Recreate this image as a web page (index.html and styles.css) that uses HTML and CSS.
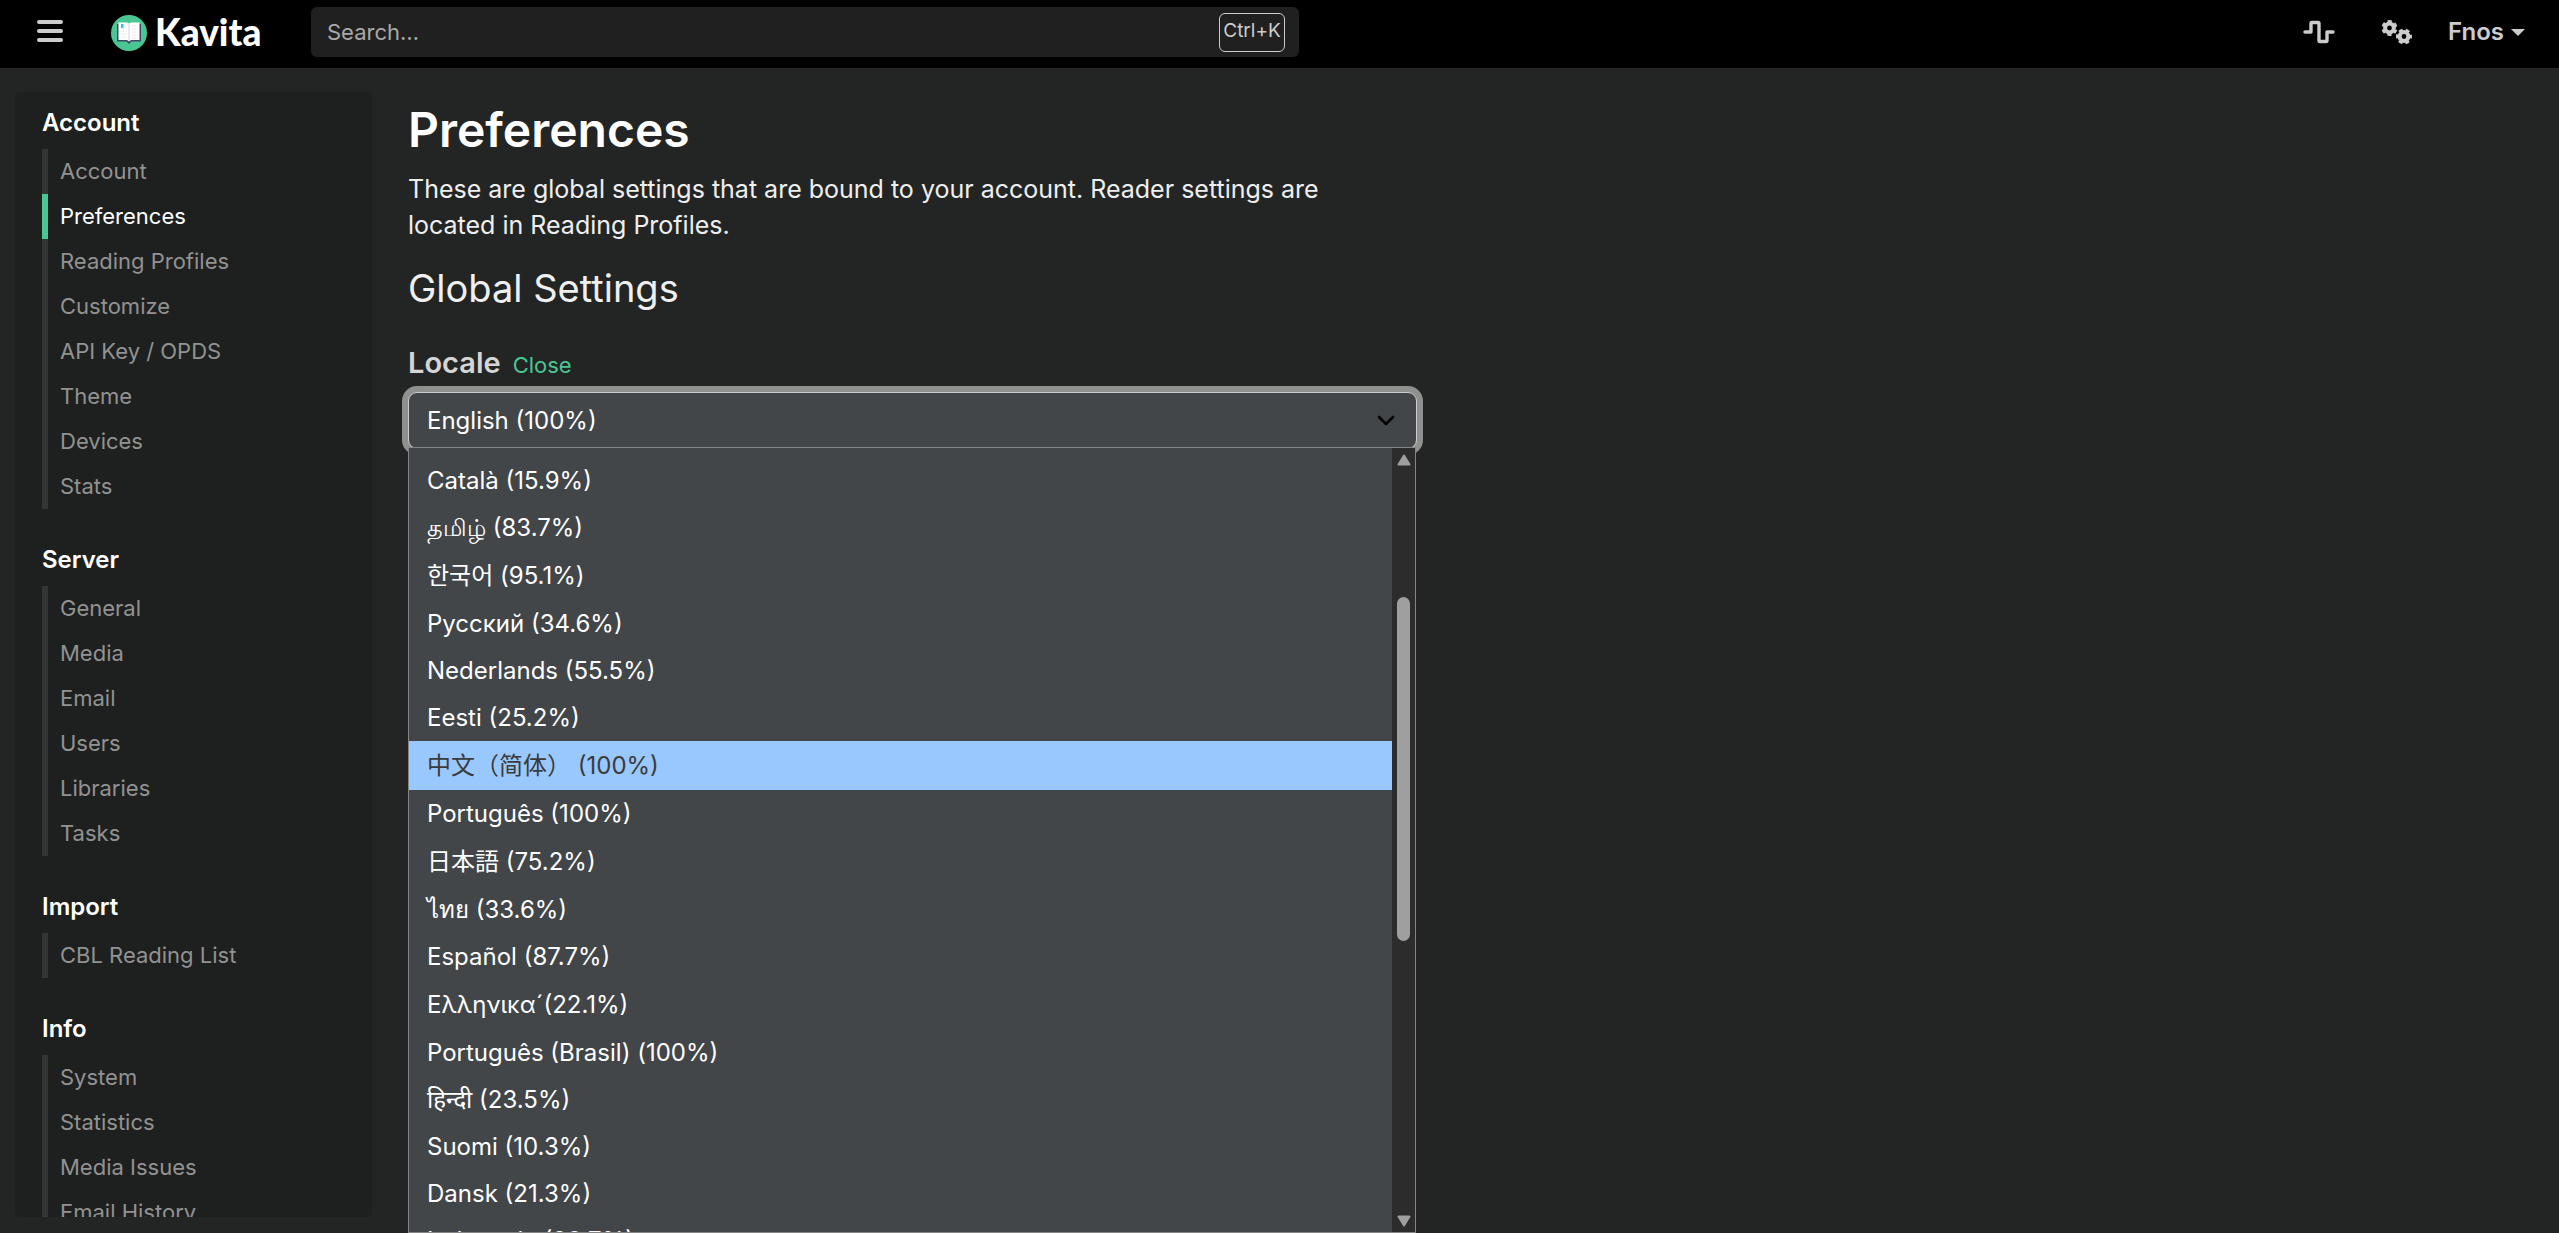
FILE: index.html
```html
<!DOCTYPE html>
<html lang="en">
<head>
    <meta charset="UTF-8">
    <meta name="viewport" content="width=device-width, initial-scale=1.0">
    <title>Kavita - Preferences</title>
    <link rel="stylesheet" href="styles.css">
</head>
<body>
    <header class="navbar">
        <button class="icon-btn menu-btn" type="button" aria-label="Toggle menu">
            <svg width="26" height="24" viewBox="0 0 26 24"><path d="M2 2h22M2 11h22M2 20h22" stroke="currentColor" stroke-width="4" stroke-linecap="round"/></svg>
        </button>
        <a class="brand" href="#">
            <svg width="36" height="36" viewBox="0 0 36 36">
                <circle cx="18" cy="18" r="18" fill="#4ac694"/>
                <path d="M6 9h24v17.500h-9.500L18 29l-2.500-2.500H6z" fill="#3f4a66"/>
                <path d="M7.500 7.500H16l2 1 2-1h8.500V25H20l-2 1.500-2-1.500H7.500z" fill="#fff"/>
                <path d="M18 8.500v17.500" stroke="#d5d5dc" stroke-width="1"/>
                <path d="M9.500 13h6M9.500 16h6M9.500 19h6M9.500 22h6M20.500 11h6M20.500 14h6M20.500 17h6M20.500 20h6M20.500 23h6" stroke="#ececf0" stroke-width="1"/>
                <path d="M10 9h2.500v4.500L11.200 12.500 10 13.500z" fill="#3db8ea"/>
            </svg>
            <span class="brand-name">Kavita</span>
        </a>
        <div class="search">
            <input class="search-input" type="text" placeholder="Search…" aria-label="Search">
            <kbd class="search-key">Ctrl+K</kbd>
        </div>
        <nav class="nav-right">
            <button class="icon-btn" type="button" aria-label="Activity">
                <svg width="32" height="24" viewBox="0 0 32 24"><path d="M2 12h6V3.500q0-1 1-1h6q1 0 1 1v17q0 1 1 1h6q1 0 1-1V12h6" fill="none" stroke="currentColor" stroke-width="3.400" stroke-linecap="round" stroke-linejoin="round"/></svg>
            </button>
            <button class="icon-btn" type="button" aria-label="Settings">
                <svg width="32" height="26" viewBox="0 0 32 26">
                    <g fill="none" stroke="currentColor">
                        <circle cx="8.500" cy="9" r="4.400" stroke-width="4"/>
                        <circle cx="8.500" cy="9" r="6.700" stroke-width="2.600" stroke-dasharray="4 3.016" stroke-dashoffset="2" transform="rotate(30 8.500 9)"/>
                        <circle cx="23" cy="17.500" r="4.400" stroke-width="4"/>
                        <circle cx="23" cy="17.500" r="6.700" stroke-width="2.600" stroke-dasharray="4 3.016" stroke-dashoffset="2"/>
                    </g>
                </svg>
            </button>
            <button class="user-btn" type="button">Fnos<span class="caret"></span></button>
        </nav>
    </header>

    <div class="layout">
        <aside class="sidenav">
            <h2 class="side-title">Account</h2>
            <ul class="side-list">
                <li><a href="#">Account</a></li>
                <li class="active"><a href="#">Preferences</a></li>
                <li><a href="#">Reading Profiles</a></li>
                <li><a href="#">Customize</a></li>
                <li><a href="#">API Key / OPDS</a></li>
                <li><a href="#">Theme</a></li>
                <li><a href="#">Devices</a></li>
                <li><a href="#">Stats</a></li>
            </ul>
            <h2 class="side-title">Server</h2>
            <ul class="side-list">
                <li><a href="#">General</a></li>
                <li><a href="#">Media</a></li>
                <li><a href="#">Email</a></li>
                <li><a href="#">Users</a></li>
                <li><a href="#">Libraries</a></li>
                <li><a href="#">Tasks</a></li>
            </ul>
            <h2 class="side-title">Import</h2>
            <ul class="side-list">
                <li><a href="#">CBL Reading List</a></li>
            </ul>
            <h2 class="side-title">Info</h2>
            <ul class="side-list">
                <li><a href="#">System</a></li>
                <li><a href="#">Statistics</a></li>
                <li><a href="#">Media Issues</a></li>
                <li><a href="#">Email History</a></li>
            </ul>
        </aside>

        <main class="content">
            <h1 class="page-title">Preferences</h1>
            <p class="intro">These are global settings that are bound to your account. Reader settings are located in Reading Profiles.</p>
            <h2 class="section-title">Global Settings</h2>
            <div class="field-head">
                <label class="field-label" for="locale">Locale</label>
                <button class="link-btn" type="button">Close</button>
            </div>
            <div class="select-wrap">
                <select class="select" id="locale">
                    <option>English (100%)</option>
                </select>
                <svg class="chevron" width="18" height="12" viewBox="0 0 18 12"><path d="M2 2l7 7 7-7" fill="none" stroke="#000" stroke-width="2.600" stroke-linecap="round" stroke-linejoin="round"/></svg>
                <div class="dropdown">
                    <ul class="options" role="listbox" aria-label="Locale">
                        <li role="option">Català (15.9%)</li>
                        <li role="option">தமிழ் (83.7%)</li>
                        <li role="option" class="tall" lang="ko">한국어 (95.1%)</li>
                        <li role="option">Русский (34.6%)</li>
                        <li role="option">Nederlands (55.5%)</li>
                        <li role="option">Eesti (25.2%)</li>
                        <li role="option" class="tall hover" lang="zh-CN" aria-selected="true">中文（简体） (100%)</li>
                        <li role="option">Português (100%)</li>
                        <li role="option" class="tall" lang="ja">日本語 (75.2%)</li>
                        <li role="option">ไทย (33.6%)</li>
                        <li role="option">Español (87.7%)</li>
                        <li role="option" class="tall">Ελληνικα´(22.1%)</li>
                        <li role="option">Português (Brasil) (100%)</li>
                        <li role="option">हिन्दी (23.5%)</li>
                        <li role="option">Suomi (10.3%)</li>
                        <li role="option">Dansk (21.3%)</li>
                        <li role="option">Indonesia (20.7%)</li>
                    </ul>
                    <div class="scrollbar">
                        <svg width="14" height="12" viewBox="0 0 14 12"><path d="M7 1.500L12.500 10.500H1.500z" fill="#9f9f9f" stroke="#9f9f9f" stroke-width="2" stroke-linejoin="round"/></svg>
                        <div class="track"><div class="thumb"></div></div>
                        <svg width="14" height="12" viewBox="0 0 14 12"><path d="M7 10.500L12.500 1.500H1.500z" fill="#9f9f9f" stroke="#9f9f9f" stroke-width="2" stroke-linejoin="round"/></svg>
                    </div>
                </div>
            </div>
        </main>
    </div>
</body>
</html>
```
FILE: styles.css
```css
* {
    box-sizing: border-box;
}
body {
    margin: 0;
    height: 100vh;
    display: flex;
    flex-direction: column;
    overflow: hidden;
    background-color: #232524;
    color: #efefef;
    font-family: Inter, "Noto Sans", "Noto Sans CJK SC", sans-serif;
    font-size: 24px;
}
h1, h2, p, ul {
    margin: 0;
    padding: 0;
}
ul {
    list-style: none;
}
a {
    color: inherit;
    text-decoration: none;
}
button {
    padding: 0;
    border: none;
    background: none;
    color: inherit;
    font-family: inherit;
    cursor: pointer;
}
svg {
    display: block;
}

/* top bar */
.navbar {
    flex: none;
    display: flex;
    align-items: center;
    height: 68px;
    padding: 0 34px 4px 37px;
    background-color: #000;
    color: #ccc;
}
.brand {
    display: flex;
    align-items: center;
    gap: 8px;
    width: 200px;
    margin-left: 48px;
    padding-top: 2px;
    color: #fff;
}
.brand-name {
    padding-bottom: 3px;
    font-family: Lato, sans-serif;
    font-size: 37px;
    font-weight: 900;
    line-height: 36px;
}
.search {
    display: flex;
    align-items: center;
    width: 988px;
    max-width: 60%;
    height: 50px;
    padding: 0 14px 0 16px;
    border-radius: 6px;
    background-color: #202020;
}
.search-input {
    flex: 1;
    min-width: 0;
    padding: 0;
    border: none;
    outline: none;
    background: none;
    color: #ccc;
    font-family: inherit;
    font-size: 22px;
}
.search-input::placeholder {
    color: #a9a9a9;
}
.search-key {
    display: flex;
    justify-content: center;
    width: 66px;
    height: 39px;
    padding-top: 3px;
    border: 1px solid #ccc;
    border-radius: 6px;
    font-family: inherit;
    font-size: 19px;
    line-height: 27px;
}
.nav-right {
    display: flex;
    align-items: center;
    gap: 46px;
    margin-left: auto;
}
.user-btn {
    display: flex;
    align-items: center;
    gap: 7px;
    margin-left: -11px;
    font-size: 24px;
    font-weight: 600;
    line-height: 32px;
}
.caret {
    border: 7px solid transparent;
    border-top-color: currentColor;
    border-bottom: none;
}

/* settings navigation */
.layout {
    flex: 1;
    display: flex;
    min-height: 0;
    padding: 24px 4px 16px 15px;
}
.sidenav {
    flex: none;
    width: 357px;
    padding: 15px 27px;
    overflow: hidden;
    border-radius: 5px;
    background-color: #1e201f;
}
.side-title {
    padding-bottom: 10px;
    color: #fff;
    font-size: 24px;
    font-weight: 600;
    line-height: 32px;
}
.side-list {
    margin-bottom: 35px;
}
.side-list li {
    padding-left: 12px;
    border-left: 6px solid #343635;
    color: #929292;
    font-size: 22px;
    line-height: 45px;
}
.side-list .active {
    border-left-color: #4ac694;
    color: #fff;
}

/* main column */
.content {
    flex: 1;
    padding-left: 36px;
}
.page-title {
    padding-top: 8px;
    color: #fff;
    font-size: 48px;
    font-weight: 600;
    line-height: 60px;
}
.intro {
    width: 47%;
    padding: 11px 24px 0 0;
    font-size: 25px;
    line-height: 36px;
}
.section-title {
    padding-top: 23px;
    font-size: 38px;
    font-weight: 400;
    line-height: 44px;
}
.field-head {
    display: flex;
    align-items: baseline;
    gap: 12px;
    padding-top: 35px;
    line-height: 36px;
}
.field-label {
    color: #d5d5d5;
    font-size: 29px;
    font-weight: 600;
}
.link-btn {
    color: #4ac694;
    font-size: 22px;
}
.select-wrap {
    position: relative;
    width: 47%;
    margin-top: 11px;
}
.select {
    display: block;
    width: 100%;
    height: 57px;
    padding: 0 18px;
    border: 1px solid #ccc;
    border-radius: 9px;
    outline: none;
    appearance: none;
    background-color: #434648;
    box-shadow: 0 0 0 6px #8f918f;
    color: #fff;
    font-family: inherit;
    font-size: 24px;
}
.chevron {
    position: absolute;
    top: 23px;
    right: 22px;
    pointer-events: none;
}

/* open option list */
.dropdown {
    position: absolute;
    top: 55px;
    left: 0;
    right: 1px;
    display: flex;
    height: calc(100vh - 447px);
    border: 1px solid #858585;
    background-color: #434648;
}
.options {
    flex: 1;
    padding-top: 9px;
    overflow: hidden;
    color: #fff;
}
.options li {
    height: 47px;
    padding-left: 18px;
    line-height: 47px;
    white-space: nowrap;
}
.options .tall {
    height: 49px;
    line-height: 49px;
}
.options .hover {
    background-color: #99c8ff;
    color: #3b3b3b;
}
.scrollbar {
    display: flex;
    flex-direction: column;
    align-items: center;
    width: 23px;
    padding: 6px 0 5px;
    background-color: #2c2c2c;
}
.track {
    flex: 1;
    width: 13px;
    padding-top: 131px;
}
.thumb {
    height: 344px;
    border-radius: 7px;
    background-color: #9f9f9f;
}
```
